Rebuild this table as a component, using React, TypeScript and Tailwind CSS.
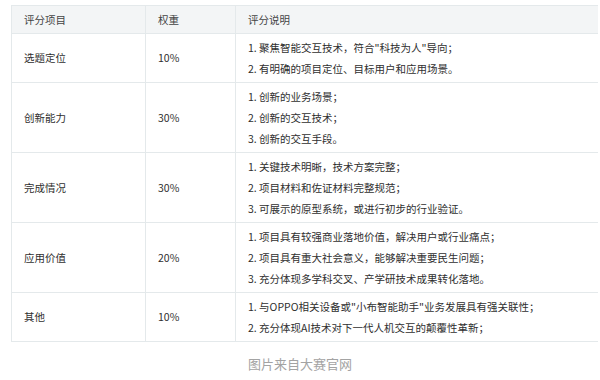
import * as React from 'react';

interface Row {
  item: string;
  weight: string;
  notes: string[];
}

const rows: Row[] = [
  {
    item: '选题定位',
    weight: '10%',
    notes: ['1. 聚焦智能交互技术，符合"科技为人"导向；', '2. 有明确的项目定位、目标用户和应用场景。'],
  },
  {
    item: '创新能力',
    weight: '30%',
    notes: ['1. 创新的业务场景；', '2. 创新的交互技术；', '3. 创新的交互手段。'],
  },
  {
    item: '完成情况',
    weight: '30%',
    notes: ['1. 关键技术明晰，技术方案完整；', '2. 项目材料和佐证材料完整规范；', '3. 可展示的原型系统，或进行初步的行业验证。'],
  },
  {
    item: '应用价值',
    weight: '20%',
    notes: [
      '1. 项目具有较强商业落地价值，解决用户或行业痛点；',
      '2. 项目具有重大社会意义，能够解决重要民生问题；',
      '3. 充分体现多学科交叉、产学研技术成果转化落地。',
    ],
  },
  {
    item: '其他',
    weight: '10%',
    notes: ['1. 与OPPO相关设备或"小布智能助手"业务发展具有强关联性；', '2. 充分体现AI技术对下一代人机交互的颠覆性革新；'],
  },
];

export default function App() {
  return (
    <div className="w-[600px] h-[380px] bg-white overflow-hidden font-['Noto_Sans_CJK_SC','Noto_Sans',sans-serif] text-[#2f2f2f]">
      <div className="pt-[5px] pl-[11px] pr-[2px]">
        <table className="w-full border-collapse table-fixed text-[10.5px]">
          <colgroup>
            <col className="w-[134px]" />
            <col className="w-[90px]" />
            <col />
          </colgroup>
          <thead>
            <tr className="bg-[#f3f5f6] text-[#444]">
              <th className="h-[28px] border border-[#e4e9eb] pl-3 text-left font-normal">评分项目</th>
              <th className="border border-[#e4e9eb] pl-3 text-left font-normal">权重</th>
              <th className="border border-[#e4e9eb] border-r-0 pl-3 text-left font-normal">评分说明</th>
            </tr>
          </thead>
          <tbody>
            {rows.map((row) => (
              <tr key={row.item}>
                <td className="border border-[#e4e9eb] pl-3 align-middle">{row.item}</td>
                <td className="border border-[#e4e9eb] pl-3 align-middle">{row.weight}</td>
                <td className="border border-[#e4e9eb] border-r-0 pl-3 py-[3px] align-middle">
                  {row.notes.map((n) => (
                    <div key={n} className="leading-[21px] whitespace-nowrap">
                      {n}
                    </div>
                  ))}
                </td>
              </tr>
            ))}
          </tbody>
        </table>
      </div>
      <p className="mt-[13px] text-center text-[13px] leading-[18px] text-[#a3a3a3]">图片来自大赛官网</p>
    </div>
  );
}
